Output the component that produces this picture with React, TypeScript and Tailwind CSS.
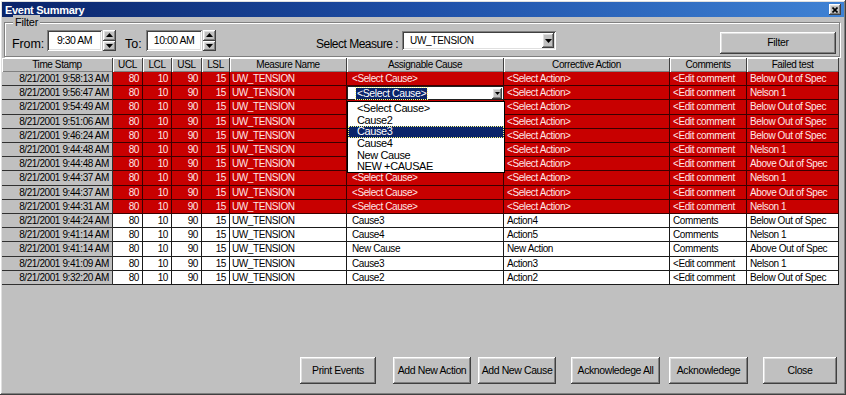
import React from "react";

const raised =
  "shadow-[inset_-1px_-1px_#404040,inset_1px_1px_#ffffff,inset_-2px_-2px_#808080,inset_2px_2px_#dfdfdf]";
const sunken =
  "shadow-[inset_1px_1px_#808080,inset_-1px_-1px_#ffffff,inset_2px_2px_#404040,inset_-2px_-2px_#dfdfdf]";

type Row = {
  ts: string;
  red: boolean;
  cause: string;
  action: string;
  comment: string;
  failed: string;
  h: string;
};

const rows: Row[] = [
  { ts: "8/21/2001 9:58:13 AM", red: true, cause: "<Select Cause>", action: "<Select Action>", comment: "<Edit comment", failed: "Below Out of Spec", h: "h-[14px]" },
  { ts: "8/21/2001 9:56:47 AM", red: true, cause: "COMBO", action: "<Select Action>", comment: "<Edit comment", failed: "Nelson 1", h: "h-[14px]" },
  { ts: "8/21/2001 9:54:49 AM", red: true, cause: "", action: "<Select Action>", comment: "<Edit comment", failed: "Below Out of Spec", h: "h-[15px]" },
  { ts: "8/21/2001 9:51:06 AM", red: true, cause: "", action: "<Select Action>", comment: "<Edit comment", failed: "Below Out of Spec", h: "h-[14px]" },
  { ts: "8/21/2001 9:46:24 AM", red: true, cause: "", action: "<Select Action>", comment: "<Edit comment", failed: "Below Out of Spec", h: "h-[14px]" },
  { ts: "8/21/2001 9:44:48 AM", red: true, cause: "", action: "<Select Action>", comment: "<Edit comment", failed: "Nelson 1", h: "h-[14px]" },
  { ts: "8/21/2001 9:44:48 AM", red: true, cause: "", action: "<Select Action>", comment: "<Edit comment", failed: "Above Out of Spec", h: "h-[14px]" },
  { ts: "8/21/2001 9:44:37 AM", red: true, cause: "<Select Cause>", action: "<Select Action>", comment: "<Edit comment", failed: "Nelson 1", h: "h-[15px]" },
  { ts: "8/21/2001 9:44:37 AM", red: true, cause: "<Select Cause>", action: "<Select Action>", comment: "<Edit comment", failed: "Above Out of Spec", h: "h-[14px]" },
  { ts: "8/21/2001 9:44:31 AM", red: true, cause: "<Select Cause>", action: "<Select Action>", comment: "<Edit comment", failed: "Nelson 1", h: "h-[14px]" },
  { ts: "8/21/2001 9:44:24 AM", red: false, cause: "Cause3", action: "Action4", comment: "Comments", failed: "Below Out of Spec", h: "h-[14px]" },
  { ts: "8/21/2001 9:41:14 AM", red: false, cause: "Cause4", action: "Action5", comment: "Comments", failed: "Nelson 1", h: "h-[14px]" },
  { ts: "8/21/2001 9:41:14 AM", red: false, cause: "New Cause", action: "New Action", comment: "Comments", failed: "Above Out of Spec", h: "h-[15px]" },
  { ts: "8/21/2001 9:41:09 AM", red: false, cause: "Cause3", action: "Action3", comment: "<Edit comment", failed: "Nelson 1", h: "h-[14px]" },
  { ts: "8/21/2001 9:32:20 AM", red: false, cause: "Cause2", action: "Action2", comment: "<Edit comment", failed: "Below Out of Spec", h: "h-[14px]" },
];

const headers = ["Time Stamp", "UCL", "LCL", "USL", "LSL", "Measure Name", "Assignable Cause", "Corrective Action", "Comments", "Failed test"];

const gridCols = "grid grid-cols-[111px_30px_29px_30px_28px_117px_157px_166px_77px_92px]";

function DownArrow() {
  return (
    <svg width="7" height="4" viewBox="0 0 7 4">
      <path d="M0 0 H7 L3.5 4 Z" fill="#000" />
    </svg>
  );
}

function UpArrow() {
  return (
    <svg width="7" height="4" viewBox="0 0 7 4">
      <path d="M0 4 H7 L3.5 0 Z" fill="#000" />
    </svg>
  );
}

function Spin() {
  return (
    <div className="ml-[1px] flex h-[21px] w-[13px] flex-col">
      <div className={`flex h-[10.5px] items-center justify-center bg-[#c0c0c0] ${raised}`}>
        <UpArrow />
      </div>
      <div className={`flex h-[10.5px] items-center justify-center bg-[#c0c0c0] ${raised}`}>
        <DownArrow />
      </div>
    </div>
  );
}

function Btn({ label, w, ml }: { label: string; w: string; ml: string }) {
  return (
    <div
      className={`flex h-[27px] items-center justify-center bg-[#c0c0c0] text-[10.5px] tracking-[-0.4px] text-black ${raised} ${w} ${ml}`}
    >
      {label}
    </div>
  );
}

function Cell({
  children,
  kind,
  align = "left",
}: {
  children?: React.ReactNode;
  kind: "red" | "white" | "ts";
  align?: "left" | "right";
}) {
  const base = "h-full overflow-hidden whitespace-nowrap border-r border-b leading-[13px]";
  const color =
    kind === "red"
      ? "bg-[#c80000] text-[#ffe6e6] border-[#3a0000]"
      : kind === "white"
      ? "bg-white text-black border-[#1a1a1a]"
      : "bg-[#c0c0c0] text-black border-[#303030]";
  const al = align === "right" ? "text-right pr-[3px]" : "text-left pl-[3px]";
  return <div className={`${base} ${color} ${al}`}>{children}</div>;
}

export default function App() {
  return (
    <div
      className={`flex h-[395px] w-[846px] flex-col bg-[#c0c0c0] p-[2px] font-['Liberation_Sans',Arial,sans-serif] text-black ${raised}`}
    >
      {/* Title bar */}
      <div className="flex h-[15px] items-center justify-between bg-gradient-to-r from-[#0a246a] via-[#1e4fa8] to-[#3f82d4] pl-[3px] pr-[3px]">
        <span className="text-[11px] font-bold leading-[14px] tracking-[-0.3px] text-white">Event Summary</span>
        <div className={`flex h-[11px] w-[12px] items-center justify-center bg-[#c0c0c0] ${raised}`}>
          <svg width="6" height="6" viewBox="0 0 6 6">
            <path d="M0.5 0.5 L5.5 5.5 M5.5 0.5 L0.5 5.5" stroke="#000" strokeWidth="1.6" />
          </svg>
        </div>
      </div>

      {/* Filter group */}
      <div className="relative ml-[2px] mr-[4px] mt-[5px] h-[35px] border border-[#808080] shadow-[1px_1px_0_#ffffff,inset_1px_1px_0_#ffffff]">
        <span className="absolute left-[8px] top-[-8px] bg-[#c0c0c0] px-[2px] text-[11px] leading-[14px] tracking-[-0.2px]">
          Filter
        </span>
        <div className="flex items-start pl-[7px] pt-[7px]">
          <span className="mt-[7px] w-[35px] text-[12.5px] leading-[14px] tracking-[-0.1px]">From:</span>
          <div className={`flex h-[21px] w-[55px] items-center justify-center bg-white text-[10.5px] tracking-[-0.5px] ${sunken}`}>
            9:30 AM
          </div>
          <Spin />
          <span className="ml-[9px] mt-[7px] w-[21px] text-[12.5px] leading-[14px]">To:</span>
          <div className={`flex h-[21px] w-[56px] items-center justify-center bg-white text-[10.5px] tracking-[-0.5px] ${sunken}`}>
            10:00 AM
          </div>
          <Spin />
          <span className="ml-[100px] mt-[7px] w-[86px] whitespace-nowrap text-[12px] leading-[14px] tracking-[-0.5px]">
            Select Measure :
          </span>
          <div className={`mt-[1px] flex h-[19px] w-[154px] items-center justify-between bg-white pl-[8px] pr-[2px] ${sunken}`}>
            <span className="text-[10px] tracking-[-0.3px]">UW_TENSION</span>
            <div className={`flex h-[15px] w-[12px] items-center justify-center bg-[#c0c0c0] ${raised}`}>
              <DownArrow />
            </div>
          </div>
          <div
            className={`ml-[164px] mt-[2px] flex h-[22px] w-[116px] items-center justify-center bg-[#c0c0c0] text-[10.5px] tracking-[-0.3px] ${raised}`}
          >
            Filter
          </div>
        </div>
      </div>

      {/* Table */}
      <div className="relative mt-[1px] w-[837px] text-[10px] tracking-[-0.4px]">
        <div className={`${gridCols} h-[14px]`}>
          {headers.map((h) => (
            <div
              key={h}
              className="h-full overflow-hidden whitespace-nowrap border-r border-[#404040] bg-[#c0c0c0] text-center leading-[14px] text-black shadow-[inset_1px_1px_#ffffff,inset_0_-1px_#808080]"
            >
              {h}
            </div>
          ))}
        </div>
        {rows.map((r, i) => {
          const k = r.red ? "red" : "white";
          return (
            <div key={i} className={`${gridCols} ${r.h}`}>
              <Cell kind="ts" align="right">{r.ts}</Cell>
              <Cell kind={k} align="right">80</Cell>
              <Cell kind={k} align="right">10</Cell>
              <Cell kind={k} align="right">90</Cell>
              <Cell kind={k} align="right">15</Cell>
              <Cell kind={k}>
                <span className="-ml-[1px]">UW_TENSION</span>
              </Cell>
              {r.cause === "COMBO" ? (
                <div className="flex h-full items-center justify-between border border-[#202020] bg-white pl-[8px] pr-[1px]">
                  <span className="bg-[#0a246a] px-[1px] text-[10.5px] leading-[11px] text-white outline-1 outline-dotted outline-[#ffff80]">
                    &lt;Select Cause&gt;
                  </span>
                  <div className={`flex h-[11px] w-[10px] items-center justify-center bg-[#c0c0c0] ${raised}`}>
                    <svg width="5" height="3" viewBox="0 0 5 3">
                      <path d="M0 0 H5 L2.5 3 Z" fill="#000" />
                    </svg>
                  </div>
                </div>
              ) : (
                <Cell kind={k}>
                  <span className="pl-[2px]">{r.cause}</span>
                </Cell>
              )}
              <Cell kind={k}>{r.action}</Cell>
              <Cell kind={k}>{r.comment}</Cell>
              <Cell kind={k}>{r.failed}</Cell>
            </div>
          );
        })}

        {/* Dropdown list overlay */}
        <div className="absolute left-[345px] top-[43px] h-[72px] w-[158px] border border-[#000] bg-white pt-[1px] text-[11px] tracking-[-0.4px] text-black">
          {["<Select Cause>", "Cause2", "Cause3", "Cause4", "New Cause", "NEW +CAUSAE"].map((c) => (
            <div
              key={c}
              className={`h-[11.7px] whitespace-nowrap pl-[9px] leading-[11.7px] ${
                c === "Cause3" ? "bg-[#0a246a] text-white outline-1 outline-dotted outline-[#ffff80] -outline-offset-1" : ""
              }`}
            >
              {c}
            </div>
          ))}
        </div>
      </div>

      <div className="flex-1" />

      {/* Buttons */}
      <div className="mb-[9px] flex">
        <Btn label="Print Events" w="w-[76px]" ml="ml-[298px]" />
        <Btn label="Add New Action" w="w-[78px]" ml="ml-[17px]" />
        <Btn label="Add New Cause" w="w-[78px]" ml="ml-[7px]" />
        <Btn label="Acknowledege All" w="w-[89px]" ml="ml-[15px]" />
        <Btn label="Acknowledege" w="w-[79px]" ml="ml-[9px]" />
        <Btn label="Close" w="w-[74px]" ml="ml-[15px]" />
      </div>
    </div>
  );
}
